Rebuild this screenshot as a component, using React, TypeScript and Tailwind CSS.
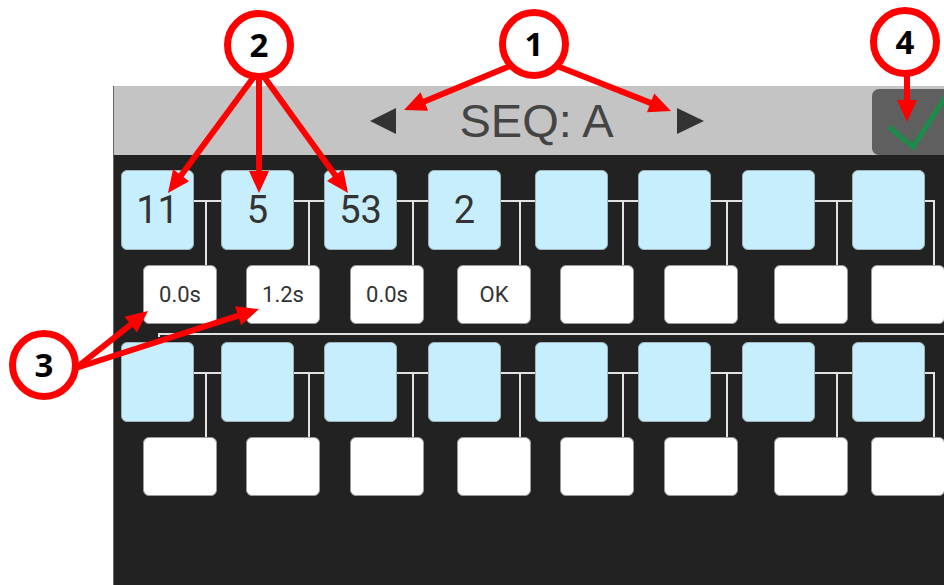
import React from "react";

const cellW = ["w-[100px]", "w-[103px]", "w-[104px]", "w-[107px]", "w-[103px]", "w-[104px]", "w-[110px]", "w-[97px]"];
const whiteMl = ["ml-[22px]", "ml-[25px]", "ml-[26px]", "ml-[29px]", "ml-[25px]", "ml-[26px]", "ml-[32px]", "ml-[19px]"];
const vLeft = ["left-[84px]", "left-[87px]", "left-[88px]", "left-[91px]", "left-[87px]", "left-[88px]", "left-[94px]", "left-[81px]"];
const hRight = ["right-0", "right-0", "right-0", "right-0", "right-0", "right-0", "right-0", "right-[14px]"];

function Cell({ i, top, bottom }: { i: number; top?: string; bottom?: string }) {
  return (
    <div className={`relative flex shrink-0 flex-col ${cellW[i]}`}>
      <div className={`absolute left-[73px] top-[30px] h-[2px] bg-[#e2e2e2] ${hRight[i]}`} />
      <div className={`absolute top-[30px] h-[65px] w-[2px] bg-[#e2e2e2] ${vLeft[i]}`} />
      <div className="relative flex h-[80px] w-[73px] items-center justify-center rounded-[6px] border border-[#9fb3ba] bg-[#c7eefd] text-[38px] leading-none text-[#333]">
        {top}
      </div>
      <div className={`relative mt-[15px] flex h-[59px] w-[74px] items-center justify-center rounded-[6px] border border-[#9a9a9a] bg-white text-[22px] leading-none text-[#333] ${whiteMl[i]}`}>
        {bottom}
      </div>
    </div>
  );
}

function Arrow({ x1, y1, x2, y2 }: { x1: number; y1: number; x2: number; y2: number }) {
  const dx = x2 - x1;
  const dy = y2 - y1;
  const len = Math.hypot(dx, dy);
  const ux = dx / len;
  const uy = dy / len;
  const L = 22;
  const W = 10;
  const bx = x2 - ux * L;
  const by = y2 - uy * L;
  const nx = -uy;
  const ny = ux;
  const pts = `${x2},${y2} ${bx + nx * W},${by + ny * W} ${bx - nx * W},${by - ny * W}`;
  return (
    <g>
      <line x1={x1} y1={y1} x2={bx + ux * 2} y2={by + uy * 2} stroke="#ff0000" strokeWidth={6} />
      <polygon points={pts} fill="#ff0000" />
    </g>
  );
}

function Badge({ cx, cy, n }: { cx: number; cy: number; n: string }) {
  return (
    <g>
      <circle cx={cx} cy={cy} r={31.5} fill="#ffffff" stroke="#ff0000" strokeWidth={7} />
      <text
        x={cx}
        y={cy + 12}
        textAnchor="middle"
        fontFamily="'Open Sans', sans-serif"
        fontWeight={700}
        fontSize={33}
        fill="#000"
      >
        {n}
      </text>
    </g>
  );
}

export default function App() {
  const row1Top = ["11", "5", "53", "2", "", "", "", ""];
  const row1Bottom = ["0.0s", "1.2s", "0.0s", "OK", "", "", "", ""];
  return (
    <div className="relative h-[585px] w-[944px] overflow-hidden bg-white" style={{ fontFamily: "Roboto, 'Liberation Sans', sans-serif" }}>
      <div className="pl-[113px] pt-[86px]">
        <div className="flex h-[499px] w-[831px] flex-col overflow-hidden border-l border-[#666] bg-[#222222]">
          <div className="flex h-[69px] shrink-0 items-center bg-[#c4c4c4]">
            <div className="flex-1" />
            <div className="ml-[16px] flex items-center gap-[63px]">
              <svg width="26" height="26" viewBox="0 0 26 26">
                <polygon points="0,13 26,0 26,26" fill="#333" />
              </svg>
              <div className="text-[47px] leading-none text-[#444]" style={{ fontFamily: "'Liberation Sans', Arial, sans-serif" }}>
                SEQ: A
              </div>
              <svg width="27" height="26" viewBox="0 0 27 26">
                <polygon points="27,13 0,0 0,26" fill="#333" />
              </svg>
            </div>
            <div className="flex flex-1 justify-end">
              <div className="-mr-[8px] mt-[3px] h-[66px] w-[80px] overflow-hidden rounded-[7px] bg-[#5f5f5f]">
                <svg width="80" height="66" viewBox="0 0 80 66">
                  <polyline points="17,38 41,58 80,-2" fill="none" stroke="#1c8c4b" strokeWidth={5} />
                </svg>
              </div>
            </div>
          </div>
          <div className="mt-[15px] flex pl-[7px]">
            {row1Top.map((t, i) => (
              <Cell key={i} i={i} top={t} bottom={row1Bottom[i]} />
            ))}
          </div>
          <div className="ml-[44px] mt-[9px] h-[4px] border-l-2 border-t-2 border-[#e2e2e2]" />
          <div className="mt-[5px] flex pl-[7px]">
            {row1Top.map((_, i) => (
              <Cell key={i} i={i} />
            ))}
          </div>
        </div>
      </div>
      <svg className="pointer-events-none absolute left-0 top-0" width="944" height="585" viewBox="0 0 944 585">
        <Arrow x1={256} y1={74} x2={168} y2={193} />
        <Arrow x1={259} y1={74} x2={259} y2={193} />
        <Arrow x1={262} y1={74} x2={348} y2={193} />
        <Arrow x1={510} y1={66} x2={404} y2={110} />
        <Arrow x1={557} y1={66} x2={671} y2={111} />
        <Arrow x1={907} y1={72} x2={907} y2={122} />
        <Arrow x1={76} y1={368} x2={148} y2={311} />
        <Arrow x1={76} y1={368} x2={259} y2={309} />
        <Badge cx={259} cy={45} n="2" />
        <Badge cx={534} cy={44} n="1" />
        <Badge cx={905} cy={42} n="4" />
        <Badge cx={44} cy={365} n="3" />
      </svg>
    </div>
  );
}
